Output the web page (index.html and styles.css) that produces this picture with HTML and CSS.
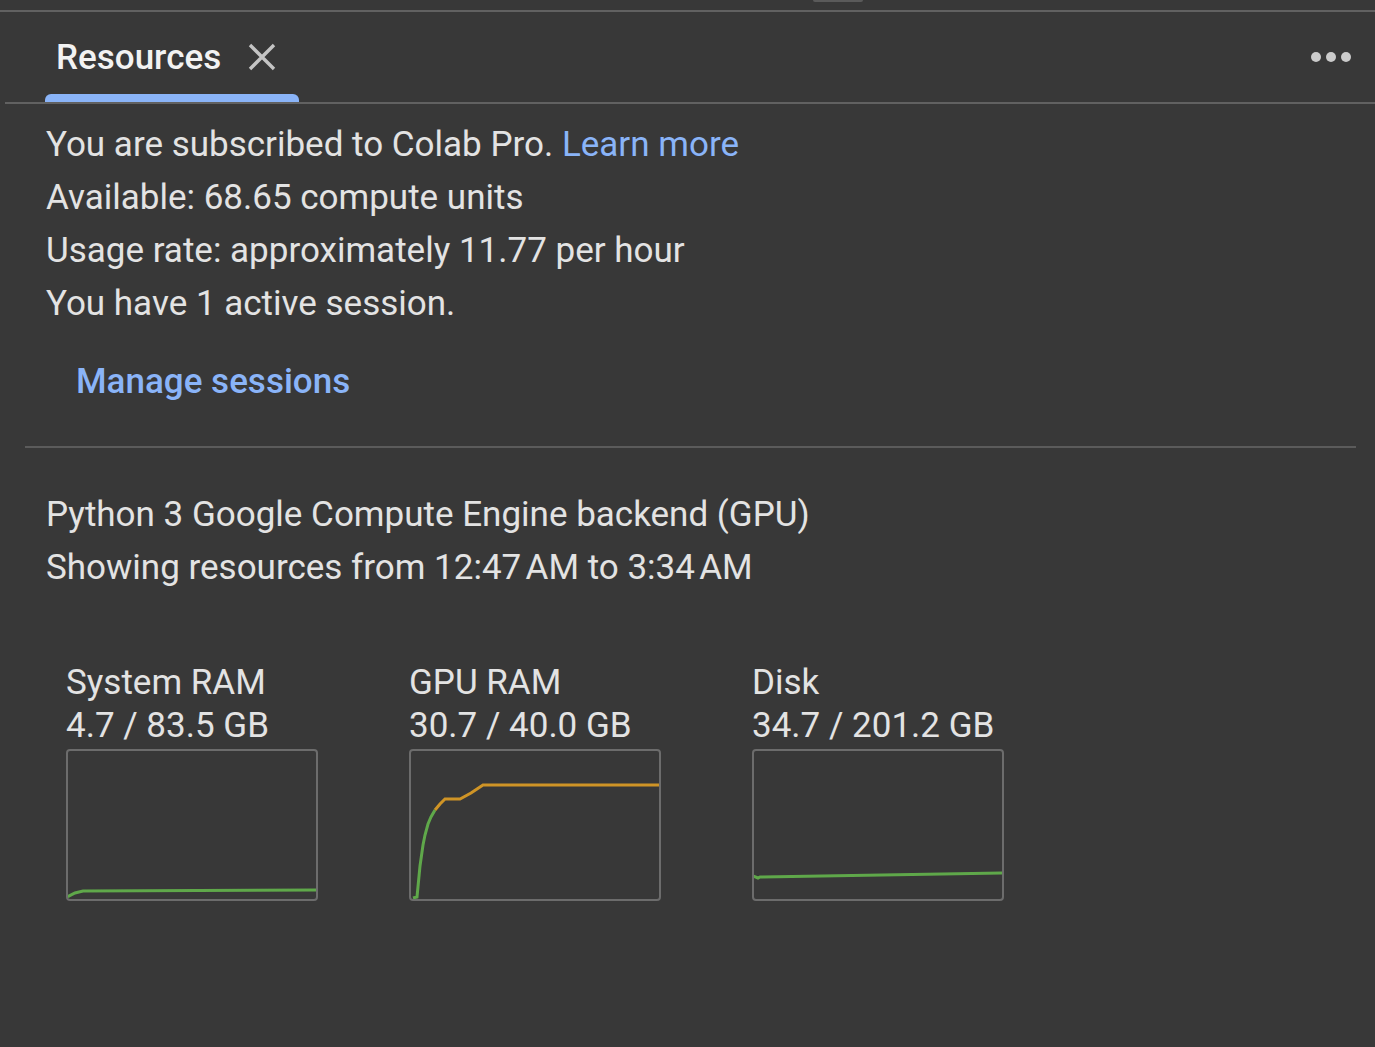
FILE: index.html
```html
<!DOCTYPE html>
<html>
<head>
<meta charset="utf-8">
<link rel="stylesheet" href="styles.css">
</head>
<body>
<div class="topbar"><div class="handle"></div></div>
<div class="tabs">
  <div class="tab">
    <span class="tab-label">Resources</span>
    <svg class="close" width="28" height="28" viewBox="0 0 28 28"><path d="M2 2 L26 26 M26 2 L2 26" stroke="#c4c4c4" stroke-width="3.4" fill="none"/></svg>
    <div class="indicator"></div>
  </div>
  <div class="more"><span class="dot"></span><span class="dot"></span><span class="dot"></span></div>
</div>
<div class="content">
  <div class="info">
    <p>You are subscribed to Colab Pro. <a class="link">Learn more</a></p>
    <p>Available: 68.65 compute units</p>
    <p>Usage rate: approximately 11.77 per hour</p>
    <p>You have 1 active session.</p>
  </div>
  <div class="manage">Manage sessions</div>
</div>
<div class="sep"></div>
<div class="backend">
  <p>Python 3 Google Compute Engine backend (GPU)</p>
  <p>Showing resources from 12:47&#8239;AM to 3:34&#8239;AM</p>
</div>
<div class="charts">
  <div class="chart">
    <div class="c-title">System RAM</div>
    <div class="c-value">4.7 / 83.5 GB</div>
    <div class="c-box">
      <svg width="248" height="148" viewBox="0 0 248 148"><polyline points="-1,146 7,142 15,140 248,139" fill="none" stroke="#5fa84a" stroke-width="3"/></svg>
    </div>
  </div>
  <div class="chart">
    <div class="c-title">GPU RAM</div>
    <div class="c-value">30.7 / 40.0 GB</div>
    <div class="c-box">
      <svg width="248" height="148" viewBox="0 0 248 148">
        <polyline points="2,147 6,146 9,115 12,94 14,84 17,73 20,66 24,59" fill="none" stroke="#5fa84a" stroke-width="3"/>
        <polyline points="24,59 29,53 34,48 49,48 60,42 72,34 249,34" fill="none" stroke="#cf9426" stroke-width="3"/>
      </svg>
    </div>
  </div>
  <div class="chart">
    <div class="c-title">Disk</div>
    <div class="c-value">34.7 / 201.2 GB</div>
    <div class="c-box">
      <svg width="248" height="148" viewBox="0 0 248 148"><polyline points="-1,125 4,127 6,126 249,122" fill="none" stroke="#5fa84a" stroke-width="3"/></svg>
    </div>
  </div>
</div>
</body>
</html>
```
FILE: styles.css
```css
html, body {
  margin: 0;
  padding: 0;
  background: #383838;
  height: 100%;
}
body {
  font-family: Roboto, "Noto Sans", sans-serif;
  color: #e3e3e3;
  font-size: 35px;
  overflow: hidden;
}
p { margin: 0; }
.topbar {
  height: 10px;
  border-bottom: 2px solid #616161;
  position: relative;
}
.handle {
  position: absolute;
  left: 813px;
  top: 0;
  width: 50px;
  height: 2px;
  background: #5a5a5a;
  border-radius: 0 0 3px 3px;
}
.tabs {
  display: flex;
  align-items: stretch;
  justify-content: space-between;
  height: 90px;
  margin-left: 5px;
  border-bottom: 2px solid #616161;
}
.tab {
  position: relative;
  display: flex;
  align-items: center;
  margin-left: 40px;
  padding: 0 0 0 11px;
  width: 243px;
}
.tab-label {
  font-weight: 500;
  color: #f2f2f2;
  font-size: 35px;
}
.close {
  margin-left: 27px;
}
.indicator {
  position: absolute;
  left: 0;
  right: 0;
  bottom: 0;
  height: 8px;
  background: #8ab4f8;
  border-radius: 6px 6px 0 0;
}
.more {
  display: flex;
  align-items: center;
  gap: 5px;
  padding: 0 24px 0 0;
}
.dot {
  width: 10px;
  height: 10px;
  border-radius: 50%;
  background: #cbcbcb;
}
.content {
  padding: 14px 0 0 46px;
}
.info p {
  line-height: 53px;
}
.link {
  color: #8ab4f8;
}
.manage {
  color: #8ab4f8;
  font-weight: 500;
  line-height: 53px;
  margin: 25px 0 0 30px;
}
.sep {
  margin: 38px 19px 0 25px;
  height: 2px;
  background: #5b5b5b;
}
.backend {
  padding: 40px 0 0 46px;
}
.backend p {
  line-height: 53px;
}
.charts {
  display: flex;
  gap: 91px;
  padding: 67px 0 0 66px;
}
.chart {
  width: 252px;
}
.c-title, .c-value {
  line-height: 43px;
  white-space: nowrap;
}
.c-box {
  margin-top: 2px;
  width: 248px;
  height: 148px;
  border: 2px solid #6c6c6c;
  border-radius: 4px;
  overflow: hidden;
}
.c-box svg { display: block; }
```
